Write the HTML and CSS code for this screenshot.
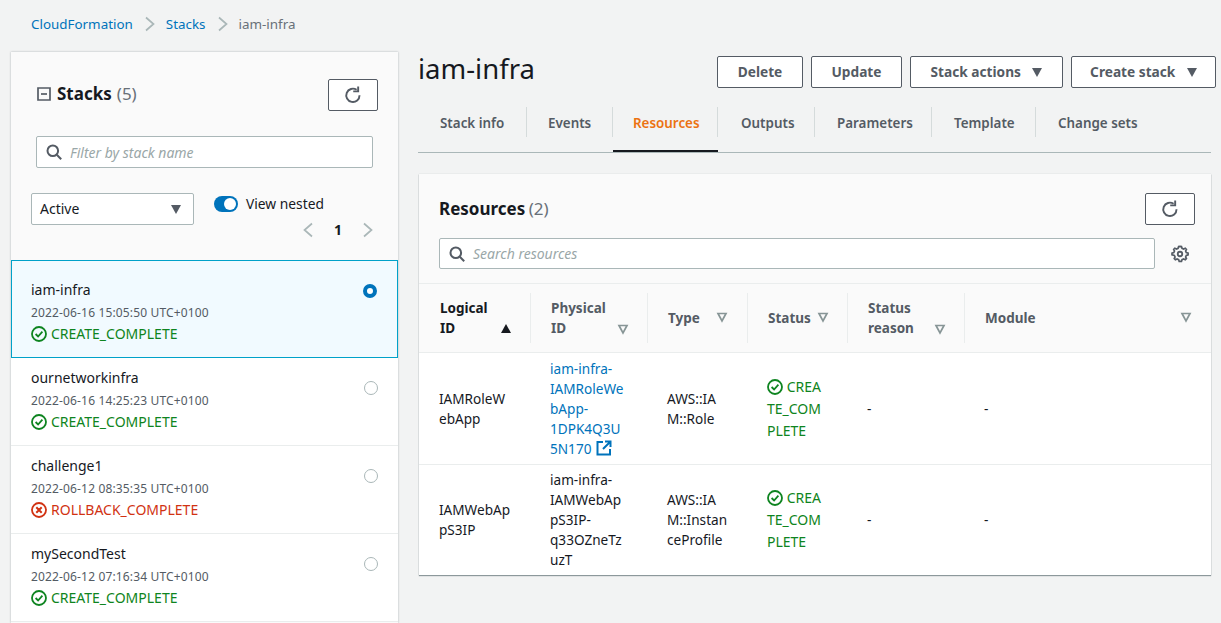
FILE: index.html
```html
<!DOCTYPE html>
<html lang="en">
<head>
  <meta charset="UTF-8">
  <title>iam-infra - CloudFormation</title>
  <link rel="stylesheet" href="styles.css">
</head>
<body>

<svg class="icon-defs" width="0" height="0">
  <symbol id="i-refresh" viewBox="0 0 16 16"><path d="M13.8 8.2A5.9 5.9 0 1 1 11.2 3.4" fill="none" stroke="currentColor" stroke-width="1.7"/><path d="M12.6 .4v4.4H8.2" fill="none" stroke="currentColor" stroke-width="1.7"/></symbol>
  <symbol id="i-search" viewBox="0 0 16 16"><circle cx="6.8" cy="6.8" r="5.3" fill="none" stroke="currentColor" stroke-width="2"/><path d="M10.8 10.8l4.4 4.4" stroke="currentColor" stroke-width="2"/></symbol>
  <symbol id="i-ok" viewBox="0 0 16 16"><circle cx="8" cy="8" r="7" fill="none" stroke="currentColor" stroke-width="1.8"/><path d="M4.6 8l2.5 2.5 4.3-4.8" fill="none" stroke="currentColor" stroke-width="1.8"/></symbol>
  <symbol id="i-fail" viewBox="0 0 16 16"><circle cx="8" cy="8" r="7" fill="none" stroke="currentColor" stroke-width="1.8"/><path d="M5.3 5.3l5.4 5.4M10.7 5.3l-5.4 5.4" stroke="currentColor" stroke-width="2"/></symbol>
  <symbol id="i-filter" viewBox="0 0 12 12"><path d="M2 2.5h8L6 10z" fill="none" stroke="currentColor" stroke-width="1.7"/></symbol>
</svg>

<div class="breadcrumb">
  <a href="#">CloudFormation</a>
  <svg class="crumb-sep" width="12" height="16" viewBox="0 0 12 16"><path d="M2 1.5l7.5 6.5L2 14.5" fill="none" stroke="currentColor" stroke-width="1.7"/></svg>
  <a href="#">Stacks</a>
  <svg class="crumb-sep" width="12" height="16" viewBox="0 0 12 16"><path d="M2 1.5l7.5 6.5L2 14.5" fill="none" stroke="currentColor" stroke-width="1.7"/></svg>
  <span class="crumb-current">iam-infra</span>
</div>

<div class="layout">
  <aside class="stacks-panel">
    <div class="stacks-head">
      <h2 class="stacks-title">
        <svg width="14" height="14" viewBox="0 0 14 14"><path d="M1 1h12v12H1z" fill="none" stroke="#545b64" stroke-width="1.7"/><path d="M4 7h6" stroke="#545b64" stroke-width="1.7"/></svg>
        Stacks <span class="count">(5)</span>
      </h2>
      <button class="btn-icon btn-wide"><svg width="18" height="18"><use href="#i-refresh"/></svg></button>
    </div>
    <div class="filter-box">
      <svg width="16" height="16"><use href="#i-search"/></svg>
      <span class="placeholder">Filter by stack name</span>
    </div>
    <div class="filter-row">
      <div class="select">Active <span class="caret"></span></div>
      <div class="nested">
        <div class="toggle-line">
          <span class="toggle"><span class="knob"></span></span>
          <span>View nested</span>
        </div>
        <div class="pager">
          <svg width="12" height="16" viewBox="0 0 12 16"><path d="M10 1.5L2.5 8l7.5 6.5" fill="none" stroke="currentColor" stroke-width="1.7"/></svg>
          <b>1</b>
          <svg width="12" height="16" viewBox="0 0 12 16"><path d="M2 1.5l7.5 6.5L2 14.5" fill="none" stroke="currentColor" stroke-width="1.7"/></svg>
        </div>
      </div>
    </div>

    <ul class="stack-list">
      <li class="stack-item selected">
        <div>
          <div class="stack-name">iam-infra</div>
          <div class="stack-date">2022-06-16 15:05:50 UTC+0100</div>
          <div class="status ok"><svg width="16" height="16"><use href="#i-ok"/></svg>CREATE_COMPLETE</div>
        </div>
        <span class="radio on"></span>
      </li>
      <li class="stack-item">
        <div>
          <div class="stack-name">ournetworkinfra</div>
          <div class="stack-date">2022-06-16 14:25:23 UTC+0100</div>
          <div class="status ok"><svg width="16" height="16"><use href="#i-ok"/></svg>CREATE_COMPLETE</div>
        </div>
        <span class="radio"></span>
      </li>
      <li class="stack-item">
        <div>
          <div class="stack-name">challenge1</div>
          <div class="stack-date">2022-06-12 08:35:35 UTC+0100</div>
          <div class="status fail"><svg width="16" height="16"><use href="#i-fail"/></svg>ROLLBACK_COMPLETE</div>
        </div>
        <span class="radio"></span>
      </li>
      <li class="stack-item">
        <div>
          <div class="stack-name">mySecondTest</div>
          <div class="stack-date">2022-06-12 07:16:34 UTC+0100</div>
          <div class="status ok"><svg width="16" height="16"><use href="#i-ok"/></svg>CREATE_COMPLETE</div>
        </div>
        <span class="radio"></span>
      </li>
    </ul>
  </aside>

  <main class="detail">
    <div class="detail-head">
      <h1>iam-infra</h1>
      <div class="actions">
        <button class="btn btn-delete">Delete</button>
        <button class="btn btn-update">Update</button>
        <button class="btn btn-stack">Stack actions <span class="caret"></span></button>
        <button class="btn btn-create">Create stack <span class="caret"></span></button>
      </div>
    </div>

    <div class="tabs">
      <a class="tab t1">Stack info</a>
      <a class="tab t2">Events</a>
      <a class="tab t3 active">Resources</a>
      <a class="tab t4">Outputs</a>
      <a class="tab t5">Parameters</a>
      <a class="tab t6">Template</a>
      <a class="tab t7">Change sets</a>
    </div>

    <section class="card">
      <div class="card-head">
        <div class="card-title-row">
          <h2>Resources <span class="count">(2)</span></h2>
          <button class="btn-icon"><svg width="18" height="18"><use href="#i-refresh"/></svg></button>
        </div>
        <div class="search-row">
          <div class="search-box">
            <svg width="16" height="16"><use href="#i-search"/></svg>
            <span class="placeholder">Search resources</span>
          </div>
          <svg class="gear" width="18" height="18" viewBox="0 0 16 16"><path d="M8 1.2l1.3.2.5 1.6 1.4.6 1.5-.7 1 1-.7 1.5.6 1.4 1.6.5v1.4l-1.6.5-.6 1.4.7 1.5-1 1-1.5-.7-1.4.6-.5 1.6H7.3l-.5-1.6-1.4-.6-1.5.7-1-1 .7-1.5-.6-1.4L.9 8.7V7.3l1.6-.5.6-1.4-.7-1.5 1-1 1.5.7 1.4-.6.5-1.6z" fill="none" stroke="#545b64" stroke-width="1.5"/><circle cx="8" cy="8" r="2" fill="none" stroke="#545b64" stroke-width="1.6"/></svg>
        </div>
      </div>

      <table class="res-table">
        <colgroup>
          <col class="c-logical"><col class="c-physical"><col class="c-type"><col class="c-status"><col class="c-reason"><col>
        </colgroup>
        <thead>
          <tr>
            <th><div class="th-in strong">Logical<br>ID<span class="sort-on"></span></div></th>
            <th><div class="th-in">Physical<br>ID<svg width="12" height="12"><use href="#i-filter"/></svg></div></th>
            <th><div class="th-in mid">Type<svg width="12" height="12"><use href="#i-filter"/></svg></div></th>
            <th><div class="th-in mid">Status<svg width="12" height="12"><use href="#i-filter"/></svg></div></th>
            <th><div class="th-in">Status<br>reason<svg width="12" height="12"><use href="#i-filter"/></svg></div></th>
            <th><div class="th-in mid">Module<svg width="12" height="12"><use href="#i-filter"/></svg></div></th>
          </tr>
        </thead>
        <tbody>
          <tr class="row-link">
            <td>IAMRoleW<br>ebApp</td>
            <td><a href="#" class="link">iam-infra-<br>IAMRoleWe<br>bApp-<br>1DPK4Q3U<br>5N170 <svg class="ext" width="16" height="16" viewBox="0 0 16 16"><path d="M7 2H1.5v12.5H14V9" fill="none" stroke="currentColor" stroke-width="2"/><path d="M9 1.5h5.5V7M14 2L7 9" fill="none" stroke="currentColor" stroke-width="2"/></svg></a></td>
            <td>AWS::IA<br>M::Role</td>
            <td class="status-cell"><svg width="16" height="16"><use href="#i-ok"/></svg> CREA<br>TE_COM<br>PLETE</td>
            <td>-</td>
            <td>-</td>
          </tr>
          <tr>
            <td>IAMWebAp<br>pS3IP</td>
            <td>iam-infra-<br>IAMWebAp<br>pS3IP-<br>q33OZneTz<br>uzT</td>
            <td>AWS::IA<br>M::Instan<br>ceProfile</td>
            <td class="status-cell"><svg width="16" height="16"><use href="#i-ok"/></svg> CREA<br>TE_COM<br>PLETE</td>
            <td>-</td>
            <td>-</td>
          </tr>
        </tbody>
      </table>
    </section>
  </main>
</div>

</body>
</html>
```
FILE: styles.css
```css
* {
  box-sizing: border-box;
}
html, body {
  height: 100%;
}
body {
  margin: 0;
  height: 623px;
  overflow: hidden;
  background: #f2f3f3;
  color: #16191f;
  font-family: "Noto Sans", Arial, sans-serif;
  font-size: 14px;
  line-height: 20px;
}
a {
  color: #0073bb;
  text-decoration: none;
}
ul {
  list-style: none;
  margin: 0;
  padding: 0;
}
h1, h2 {
  margin: 0;
}
.icon-defs {
  display: block;
}
svg {
  flex: none;
}

/* breadcrumb */
.breadcrumb {
  height: 52px;
  padding: 14px 0 0 31px;
  display: flex;
  align-items: flex-start;
  gap: 10px;
  font-size: 13.4px;
}
.crumb-sep {
  color: #aab7b8;
  margin: 2px 0 0 1px;
}
.crumb-current {
  color: #687078;
}

.layout {
  display: flex;
  padding-left: 11px;
  gap: 20px;
}

/* left panel */
.stacks-panel {
  width: 387px;
  flex: none;
  height: 571px;
  background: #fafafa;
  box-shadow: 0 0 2px rgba(0,28,36,.3);
}
.stacks-head {
  display: flex;
  justify-content: space-between;
  padding: 27px 20px 0 26px;
  height: 84px;
}
.stacks-title {
  font-size: 17px;
  font-weight: 700;
  line-height: 28px;
  display: flex;
  align-items: center;
  gap: 6px;
  height: 28px;
  margin-top: 1px;
}
.count {
  font-weight: 400;
  color: #687078;
  margin-left: -1px;
}
.btn-icon {
  width: 50px;
  height: 32px;
  background: #fff;
  border: 1px solid #545b64;
  border-radius: 2px;
  color: #545b64;
  padding: 0;
  display: flex;
  align-items: center;
  justify-content: center;
}
.filter-box, .search-box {
  display: flex;
  align-items: center;
  gap: 8px;
  height: 32px;
  background: #fff;
  border: 1px solid #aab7b8;
  border-radius: 2px;
  padding-left: 9px;
  color: #545b64;
}
.filter-box {
  width: 337px;
  margin-left: 25px;
}
.placeholder {
  color: #9aa7a8;
  font-style: italic;
  font-size: 14px;
  padding-top: 1px;
}
.filter-row {
  display: flex;
  padding: 25px 0 0 20px;
  height: 92px;
}
.select {
  width: 163px;
  height: 32px;
  background: #fff;
  border: 1px solid #aab7b8;
  border-radius: 2px;
  padding: 5px 12px 0 8px;
  display: flex;
  justify-content: space-between;
}
.caret {
  display: inline-block;
  width: 0;
  height: 0;
  border-left: 5.5px solid transparent;
  border-right: 5.5px solid transparent;
  border-top: 9px solid #545b64;
  margin-top: 6px;
}
.nested {
  width: 160px;
  margin-left: 20px;
}
.toggle-line {
  display: flex;
  gap: 8px;
  color: #16191f;
  align-items: center;
  height: 20px;
  margin-top: 1px;
  font-size: 13.8px;
}
.toggle {
  display: flex;
  justify-content: flex-end;
  align-items: center;
  width: 24px;
  height: 16px;
  border-radius: 8px;
  background: #0073bb;
  padding-right: 2px;
}
.knob {
  width: 12px;
  height: 12px;
  border-radius: 50%;
  background: #fff;
}
.pager {
  display: flex;
  justify-content: flex-end;
  align-items: center;
  gap: 20px;
  color: #aab7b8;
  margin-top: 6px;
  font-size: 14px;
}
.pager b {
  color: #16191f;
}

.stack-item {
  display: flex;
  justify-content: space-between;
  height: 88px;
  padding: 10px 20px 0 20px;
  background: #fff;
  border-bottom: 1px solid #eaeded;
}
.stack-item.selected {
  height: 98px;
  padding-top: 19px;
  background: #f1faff;
  border: 1px solid #00a1c9;
  padding-left: 19px;
  padding-right: 20px;
}
.stack-name {
  line-height: 20px;
}
.stack-date {
  font-size: 12px;
  letter-spacing: .15px;
  color: #545b64;
  line-height: 16px;
  margin-top: 5px;
}
.status {
  display: flex;
  align-items: center;
  gap: 4px;
  height: 20px;
  margin-top: 3px;
}
.ok {
  color: #0e8420;
}
.fail {
  color: #d13212;
}
.radio {
  width: 14px;
  height: 14px;
  border-radius: 50%;
  border: 1px solid #aab7b8;
  background: #fff;
  margin-top: 13px;
}
.radio.on {
  border: 4px solid #0073bb;
  margin-top: 4px;
}

/* right side */
.detail {
  width: 793px;
  flex: none;
}
.detail-head {
  display: flex;
  justify-content: space-between;
  width: 798px;
  height: 55px;
}
.detail-head h1 {
  font-size: 27.5px;
  font-weight: 400;
  line-height: 34px;
}
.actions {
  display: flex;
  gap: 8px;
  padding-top: 4px;
}
.btn {
  height: 32px;
  background: #fff;
  border: 1px solid #545b64;
  border-radius: 2px;
  color: #545b64;
  font-family: inherit;
  font-size: 13.7px;
  font-weight: 700;
  padding: 0 0 2px;
}
.btn .caret {
  margin: 0 0 0 8px;
}
.btn-delete { width: 86px; }
.btn-update { width: 91px; }
.btn-stack { width: 153px; }
.btn-create { width: 145px; }

.tabs {
  display: flex;
  height: 46px;
  border-bottom: 1px solid #aab7b8;
}
.tab {
  display: flex;
  align-items: flex-start;
  padding: 6px 0 0 22px;
  color: #545b64;
  font-weight: 600;
  height: 46px;
  font-size: 13.4px;
  white-space: nowrap;
}
.tab::after {
  content: "";
  width: 1px;
  height: 30px;
  background: #d5dbdb;
  margin-left: auto;
  margin-top: -6px;
}
.tab:last-child::after { display: none; }
.t1 { width: 109px; }
.t2 { width: 86px; padding-left: 21px; }
.t3 { width: 105px; padding-left: 20px; }
.t4 { width: 97px; padding-left: 23px; }
.t5 { width: 117px; }
.t6 { width: 104px; }
.t7 { width: 140px; }
.tab.active {
  color: #ec7211;
  border-bottom: 2px solid #16191f;
  height: 45px;
}
.card {
  margin: 21px 0 0 1px;
  width: 792px;
  background: #fff;
  box-shadow: 0 1px 1px 0 rgba(0,28,36,.4), 0 0 1px 0 rgba(0,28,36,.2);
}
.card-head {
  background: #fafafa;
  padding: 19px 16px 15px 20px;
  height: 109px;
}
.card-title-row {
  display: flex;
  justify-content: space-between;
  height: 45px;
}
.card-title-row h2 {
  font-size: 17px;
  line-height: 32px;
  font-weight: 700;
}
.search-row {
  display: flex;
  align-items: center;
  gap: 16px;
}
.search-box {
  flex: 1;
  height: 31px;
}
.gear {
  margin-right: 6px;
}
.res-table {
  width: 792px;
  table-layout: fixed;
  border-collapse: collapse;
}
.c-logical { width: 112px; }
.c-physical { width: 117px; }
.c-type { width: 100px; }
.c-status { width: 100px; }
.c-reason { width: 117px; }
.res-table th {
  background: #fafafa;
  border-top: 1px solid #eaeded;
  border-bottom: 1px solid #eaeded;
  height: 69px;
  padding: 0;
  text-align: left;
  color: #545b64;
  font-size: 13.5px;
  font-weight: 700;
}
.th-in {
  position: relative;
  height: 50px;
  padding: 5px 24px 0 20px;
  border-right: 1px solid #eaeded;
}
.res-table th:first-child .th-in {
  padding-left: 21px;
}
.res-table th:last-child .th-in {
  border-right: none;
}
.th-in.mid {
  padding-top: 15px;
}
.th-in.strong {
  color: #16191f;
}
.th-in svg {
  position: absolute;
  right: 18px;
  bottom: 8px;
  color: #879596;
}
.th-in.mid svg {
  bottom: 20px;
}
.res-table th:nth-child(3) svg { right: 19px; }
.res-table th:last-child svg { right: 19px; }
.sort-on {
  position: absolute;
  right: 19px;
  bottom: 10px;
  width: 0;
  height: 0;
  border-left: 5.5px solid transparent;
  border-right: 5.5px solid transparent;
  border-bottom: 9px solid #16191f;
}
.res-table td {
  padding: 5px 19px 5px 19px;
  border-bottom: 1px solid #eaeded;
  vertical-align: middle;
  font-size: 13.6px;
  line-height: 20px;
  overflow: hidden;
  white-space: nowrap;
  height: 110px;
}
.row-link td {
  height: 112px;
}
.res-table tr:last-child td {
  border-bottom: none;
}
.res-table td:first-child {
  padding-left: 20px;
}
.link {
  color: #0073bb;
}
.ext {
  vertical-align: -2px;
  margin-left: 1px;
}
.res-table .status-cell {
  color: #0e8420;
  font-size: 14px;
  line-height: 22px;
}
.status-cell svg {
  vertical-align: -3px;
}
```
